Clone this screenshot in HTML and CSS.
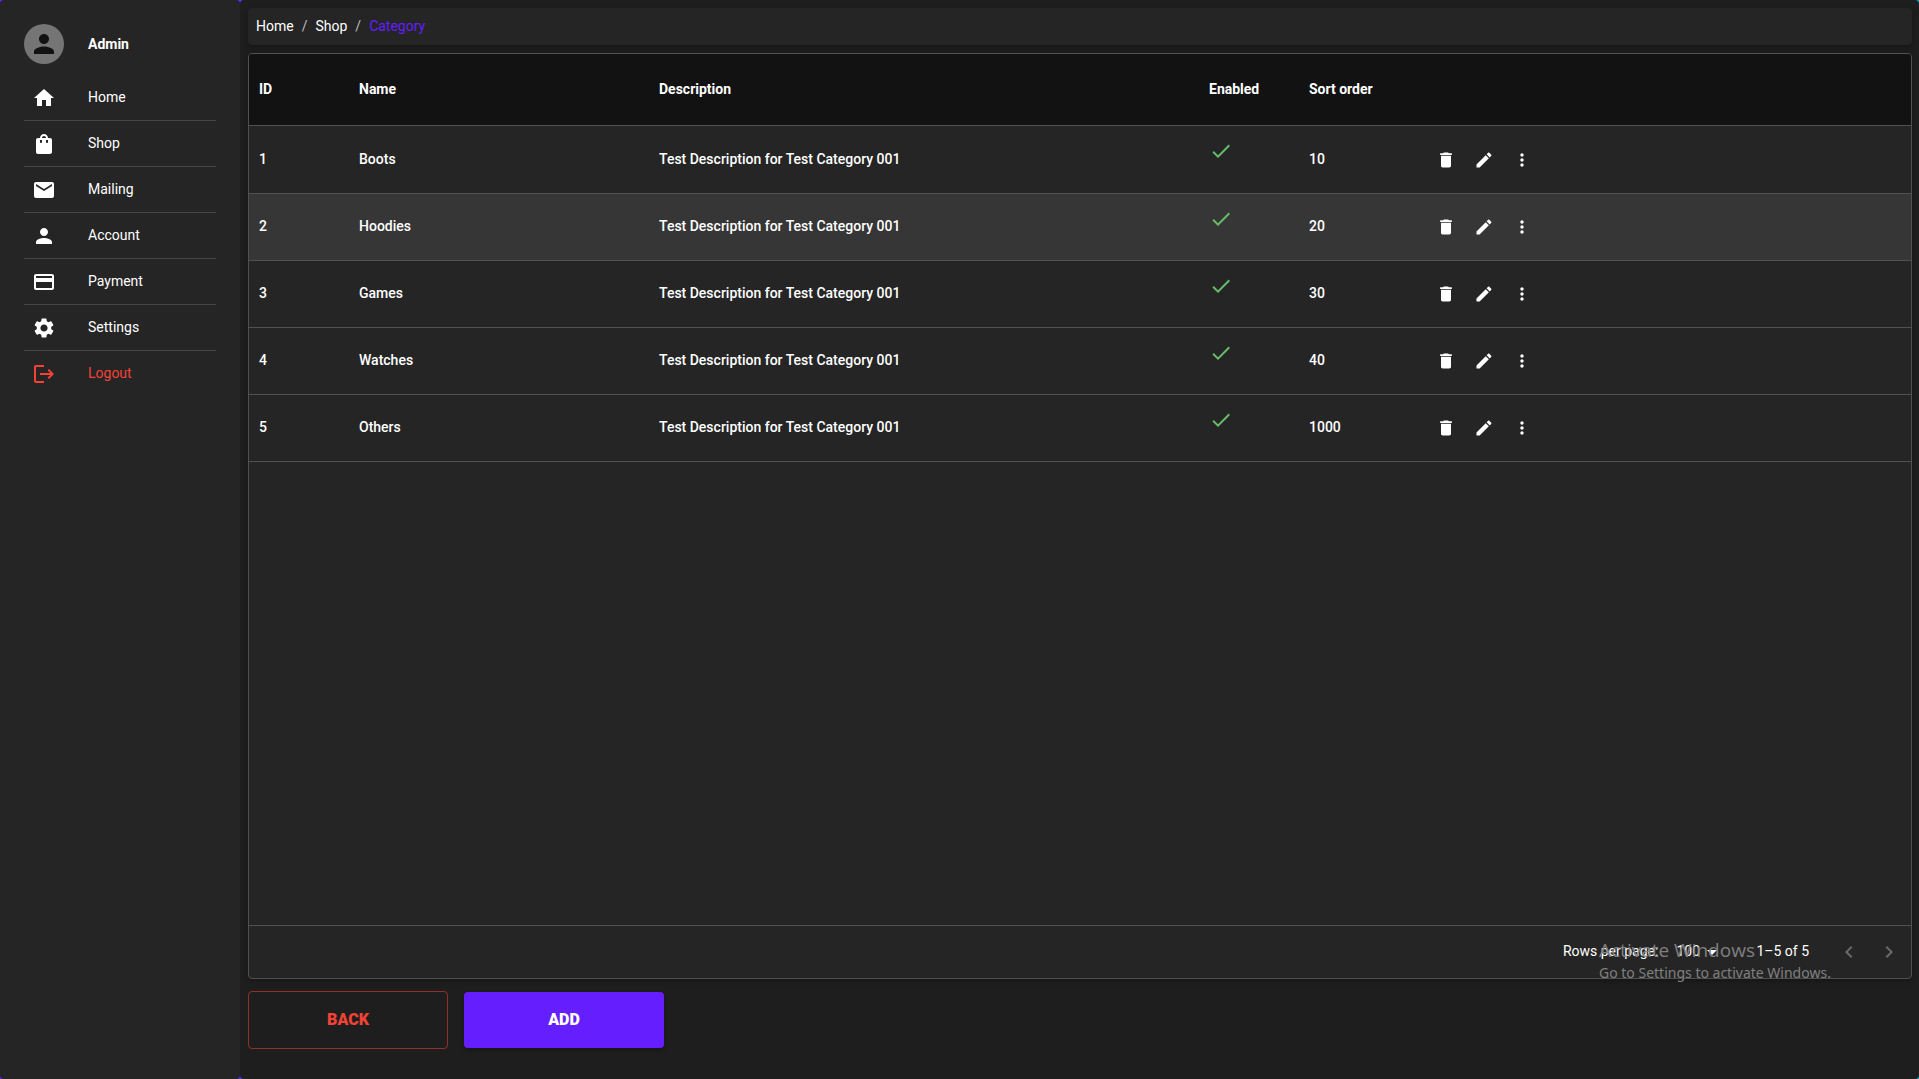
FILE: index.html
```html
<!DOCTYPE html>
<html lang="en">
<head>
<meta charset="utf-8">
<title>Shop categories</title>
<link rel="stylesheet" href="styles.css">
</head>
<body>
<svg class="sprite" aria-hidden="true">
  <symbol id="home" viewBox="0 0 24 24"><path d="M10 20v-6h4v6h5v-8h3L12 3 2 12h3v8z"/></symbol>
  <symbol id="bag" viewBox="0 0 24 24"><path d="M18 6h-2c0-2.21-1.79-4-4-4S8 3.79 8 6H6c-1.1 0-2 .9-2 2v12c0 1.1.9 2 2 2h12c1.1 0 2-.9 2-2V8c0-1.1-.9-2-2-2zm-8 4c0 .55-.45 1-1 1s-1-.45-1-1V8h2v2zm2-6c1.1 0 2 .9 2 2h-4c0-1.1.9-2 2-2zm4 6c0 .55-.45 1-1 1s-1-.45-1-1V8h2v2z"/></symbol>
  <symbol id="mail" viewBox="0 0 24 24"><path d="M20 4H4c-1.1 0-1.99.9-1.99 2L2 18c0 1.1.9 2 2 2h16c1.1 0 2-.9 2-2V6c0-1.1-.9-2-2-2zm0 4l-8 5-8-5V6l8 5 8-5v2z"/></symbol>
  <symbol id="person" viewBox="0 0 24 24"><path d="M12 12c2.21 0 4-1.79 4-4s-1.79-4-4-4-4 1.79-4 4 1.79 4 4 4zm0 2c-2.67 0-8 1.34-8 4v2h16v-2c0-2.66-5.33-4-8-4z"/></symbol>
  <symbol id="card" viewBox="0 0 24 24"><path d="M20 4H4c-1.11 0-1.99.89-1.99 2L2 18c0 1.11.89 2 2 2h16c1.11 0 2-.89 2-2V6c0-1.11-.89-2-2-2zm0 14H4v-6h16v6zm0-10H4V6h16v2z"/></symbol>
  <symbol id="gear" viewBox="0 0 24 24"><path d="M19.14 12.94c.04-.3.06-.61.06-.94 0-.32-.02-.64-.07-.94l2.03-1.58c.18-.14.23-.41.12-.61l-1.92-3.32c-.12-.22-.37-.29-.59-.22l-2.39.96c-.5-.38-1.03-.7-1.62-.94l-.36-2.54c-.04-.24-.24-.41-.48-.41h-3.84c-.24 0-.43.17-.47.41l-.36 2.54c-.59.24-1.13.57-1.62.94l-2.39-.96c-.22-.08-.47 0-.59.22L2.74 8.87c-.12.21-.08.47.12.61l2.03 1.58c-.05.3-.09.63-.09.94s.02.64.07.94l-2.03 1.58c-.18.14-.23.41-.12.61l1.92 3.32c.12.22.37.29.59.22l2.39-.96c.5.38 1.03.7 1.62.94l.36 2.54c.05.24.24.41.48.41h3.84c.24 0 .44-.17.47-.41l.36-2.54c.59-.24 1.13-.56 1.62-.94l2.39.96c.22.08.47 0 .59-.22l1.92-3.32c.12-.22.07-.47-.12-.61l-2.01-1.58zM12 15.6c-1.98 0-3.6-1.62-3.6-3.6s1.62-3.6 3.6-3.6 3.6 1.62 3.6 3.6-1.62 3.6-3.6 3.6z"/></symbol>
  <symbol id="logout" viewBox="0 0 24 24"><path d="M12 5V3H4c-1.1 0-2 .9-2 2v14c0 1.1.9 2 2 2h8v-2H4V5zm5 2-1.4 1.4 2.6 2.6H8v2h10.200l-2.600 2.600L17 17l5-5z"/></symbol>
  <symbol id="check" viewBox="0 0 24 24"><path d="M9 16.170 4.830 12l-1.420 1.410L9 19 21 7l-1.410-1.410z"/></symbol>
  <symbol id="trash" viewBox="0 0 24 24"><path d="M6 19c0 1.100.9 2 2 2h8c1.100 0 2-.9 2-2V7H6v12zM19 4h-3.500l-1-1h-5l-1 1H5v2h14V4z"/></symbol>
  <symbol id="pencil" viewBox="0 0 24 24"><path d="M3 17.250V21h3.750L17.810 9.940l-3.750-3.750L3 17.250zM20.710 7.040c.39-.39.39-1.020 0-1.410l-2.340-2.340c-.39-.39-1.020-.39-1.410 0l-1.830 1.830 3.750 3.750 1.830-1.830z"/></symbol>
  <symbol id="dots" viewBox="0 0 24 24"><path d="M12 8c1.100 0 2-.9 2-2s-.9-2-2-2-2 .9-2 2 .9 2 2 2zm0 2c-1.100 0-2 .9-2 2s.9 2 2 2 2-.9 2-2-.9-2-2-2zm0 6c-1.100 0-2 .9-2 2s.9 2 2 2 2-.9 2-2-.9-2-2-2z"/></symbol>
  <symbol id="left" viewBox="0 0 24 24"><path d="M15.410 7.410 14 6l-6 6 6 6 1.410-1.410L10.830 12z"/></symbol>
  <symbol id="right" viewBox="0 0 24 24"><path d="M8.590 16.590 13.170 12 8.590 7.410 10 6l6 6-6 6z"/></symbol>
  <symbol id="caret" viewBox="0 0 24 24"><path d="m7 10 5 5 5-5z"/></symbol>
</svg>
<div class="app">
  <aside class="sidebar">
    <div class="profile">
      <span class="avatar"><svg class="avatar-icon"><use href="#person"/></svg></span>
      <span>Admin</span>
    </div>
    <nav class="menu">
      <a class="menu-item" href="#"><svg class="icon"><use href="#home"/></svg><span class="menu-label">Home</span></a>
      <a class="menu-item" href="#"><svg class="icon"><use href="#bag"/></svg><span class="menu-label">Shop</span></a>
      <a class="menu-item" href="#"><svg class="icon"><use href="#mail"/></svg><span class="menu-label">Mailing</span></a>
      <a class="menu-item" href="#"><svg class="icon"><use href="#person"/></svg><span class="menu-label">Account</span></a>
      <a class="menu-item" href="#"><svg class="icon"><use href="#card"/></svg><span class="menu-label">Payment</span></a>
      <a class="menu-item" href="#"><svg class="icon"><use href="#gear"/></svg><span class="menu-label">Settings</span></a>
      <a class="menu-item logout" href="#"><svg class="icon"><use href="#logout"/></svg><span class="menu-label">Logout</span></a>
    </nav>
  </aside>
  <main class="content">
    <nav class="breadcrumbs" aria-label="Breadcrumb">
      <a href="#">Home</a><span class="slash">/</span><a href="#">Shop</a><span class="slash">/</span><a class="current" href="#">Category</a>
    </nav>
    <section class="grid">
      <div class="grid-body">
        <table class="categories">
          <colgroup><col class="col-small"><col class="col-name"><col class="col-description"><col class="col-small"><col class="col-sort"><col></colgroup>
          <thead>
            <tr><th>ID</th><th>Name</th><th>Description</th><th>Enabled</th><th>Sort order</th><th></th></tr>
          </thead>
          <tbody>
            <tr><td>1</td><td>Boots</td><td>Test Description for Test Category 001</td><td class="enabled"><svg class="icon"><use href="#check"/></svg></td><td>10</td><td class="tools"><div class="actions"><button aria-label="Delete"><svg class="icon-small"><use href="#trash"/></svg></button><button aria-label="Edit"><svg class="icon-small"><use href="#pencil"/></svg></button><button aria-label="More"><svg class="icon-small"><use href="#dots"/></svg></button></div></td></tr>
            <tr class="hovered"><td>2</td><td>Hoodies</td><td>Test Description for Test Category 001</td><td class="enabled"><svg class="icon"><use href="#check"/></svg></td><td>20</td><td class="tools"><div class="actions"><button aria-label="Delete"><svg class="icon-small"><use href="#trash"/></svg></button><button aria-label="Edit"><svg class="icon-small"><use href="#pencil"/></svg></button><button aria-label="More"><svg class="icon-small"><use href="#dots"/></svg></button></div></td></tr>
            <tr><td>3</td><td>Games</td><td>Test Description for Test Category 001</td><td class="enabled"><svg class="icon"><use href="#check"/></svg></td><td>30</td><td class="tools"><div class="actions"><button aria-label="Delete"><svg class="icon-small"><use href="#trash"/></svg></button><button aria-label="Edit"><svg class="icon-small"><use href="#pencil"/></svg></button><button aria-label="More"><svg class="icon-small"><use href="#dots"/></svg></button></div></td></tr>
            <tr><td>4</td><td>Watches</td><td>Test Description for Test Category 001</td><td class="enabled"><svg class="icon"><use href="#check"/></svg></td><td>40</td><td class="tools"><div class="actions"><button aria-label="Delete"><svg class="icon-small"><use href="#trash"/></svg></button><button aria-label="Edit"><svg class="icon-small"><use href="#pencil"/></svg></button><button aria-label="More"><svg class="icon-small"><use href="#dots"/></svg></button></div></td></tr>
            <tr><td>5</td><td>Others</td><td>Test Description for Test Category 001</td><td class="enabled"><svg class="icon"><use href="#check"/></svg></td><td>1000</td><td class="tools"><div class="actions"><button aria-label="Delete"><svg class="icon-small"><use href="#trash"/></svg></button><button aria-label="Edit"><svg class="icon-small"><use href="#pencil"/></svg></button><button aria-label="More"><svg class="icon-small"><use href="#dots"/></svg></button></div></td></tr>
          </tbody>
        </table>
      </div>
      <footer class="pagination">
        <label for="rows">Rows per page:</label>
        <span class="rows-select">
          <select id="rows"><option>100</option><option>50</option><option>25</option></select>
          <svg class="icon caret"><use href="#caret"/></svg>
        </span>
        <span class="range">1–5 of 5</span>
        <button class="page-button" disabled aria-label="Previous page"><svg class="icon"><use href="#left"/></svg></button>
        <button class="page-button" disabled aria-label="Next page"><svg class="icon"><use href="#right"/></svg></button>
      </footer>
    </section>
    <div class="form-buttons">
      <button class="button button-back">BACK</button>
      <button class="button button-add">ADD</button>
    </div>
  </main>
</div>
<div class="activation">
  <div class="activation-title">Activate Windows</div>
  <div class="activation-text">Go to Settings to activate Windows.</div>
</div>
</body>
</html>
```
FILE: styles.css
```css
* {
  box-sizing: border-box;
}

body {
  margin: 0;
  background: linear-gradient(to right, #651fff, #00b8d4);
  color: #fff;
  font: 400 14px/20px Roboto, sans-serif;
}

a {
  color: inherit;
  text-decoration: none;
}

button,
select {
  font: inherit;
  color: inherit;
  border: 0;
  background: none;
}

svg {
  display: block;
  fill: currentColor;
}

.sprite {
  display: none;
}

.icon {
  width: 24px;
  height: 24px;
}

.icon-small {
  width: 20px;
  height: 20px;
}

.app {
  display: flex;
  min-height: 100vh;
}

.sidebar {
  flex: none;
  width: 240px;
  padding: 24px;
  border-radius: 4px;
  background: #252525;
}

.profile {
  display: flex;
  align-items: center;
  gap: 24px;
  margin-bottom: 11px;
  font-weight: 700;
}

.avatar {
  display: grid;
  place-items: center;
  width: 40px;
  height: 40px;
  border-radius: 50%;
  background: #757575;
  color: #121212;
}

.avatar-icon {
  width: 30px;
  height: 30px;
}

.menu-item {
  display: flex;
  align-items: center;
  gap: 32px;
  height: 46px;
  padding-left: 8px;
  border-bottom: 1px solid #464646;
}

.menu-label {
  padding-bottom: 2px;
}

.menu-item:last-child {
  border-bottom-color: transparent;
}

.logout {
  color: #f44336;
}

.content {
  flex: 1;
  display: flex;
  flex-direction: column;
  gap: 8px;
  min-width: 0;
  padding: 8px 7px 30px 8px;
  border-radius: 4px;
  background: #1e1e1e;
}

.breadcrumbs {
  display: flex;
  align-items: center;
  height: 37px;
  padding: 0 8px 2px;
  border-radius: 4px;
  background: #252525;
  box-shadow: 0 2px 6px rgba(0, 0, 0, 0.3);
}

.slash {
  margin: 0 8px;
  color: #bebebe;
}

.current {
  color: #651fff;
}

.grid {
  flex: 1;
  display: flex;
  flex-direction: column;
  overflow: hidden;
  border: 1px solid #515151;
  border-radius: 4px;
  background: #252525;
  box-shadow: 0 2px 6px rgba(0, 0, 0, 0.3);
}

.grid-body {
  flex: 1;
}

.categories {
  width: 100%;
  table-layout: fixed;
  border-collapse: separate;
  border-spacing: 0;
}

.col-small {
  width: 100px;
}

.col-name {
  width: 300px;
}

.col-description {
  width: 550px;
}

.col-sort {
  width: 118px;
}

.categories th,
.categories td {
  height: 67px;
  padding: 0 10px 2px;
  border-bottom: 1px solid #515151;
  font-weight: 500;
  text-align: left;
}

.categories th {
  height: 72px;
  background: #121212;
  font-weight: 700;
}

.categories tbody tr:first-child td {
  height: 68px;
}

.hovered {
  background: #363636;
}

.categories .enabled {
  padding-top: 13px;
  vertical-align: top;
  color: #66bb6a;
}

.categories .tools {
  padding-bottom: 0;
}

.actions {
  display: flex;
}

.actions button {
  width: 38px;
  padding: 9px;
}

.pagination {
  display: flex;
  align-items: center;
  justify-content: flex-end;
  height: 53px;
  padding-right: 2px;
  border-top: 1px solid #515151;
}

.pagination label,
.range {
  padding-bottom: 2px;
}

.rows-select {
  display: grid;
  align-items: center;
  width: 58px;
  margin: 0 32px 0 8px;
}

.rows-select select,
.caret {
  grid-area: 1 / 1;
}

.rows-select select {
  appearance: none;
  padding: 0 24px 2px 10px;
}

.caret {
  justify-self: end;
  pointer-events: none;
}

.range {
  margin-right: 20px;
}

.page-button {
  width: 40px;
  padding: 8px;
  color: #6a6a6a;
}

.form-buttons {
  display: flex;
  align-items: center;
  gap: 16px;
  padding-top: 4px;
}

.button {
  width: 200px;
  height: 56px;
  border-radius: 4px;
  font-size: 16px;
  font-weight: 900;
}

.button-back {
  height: 58px;
  border: 1px solid #90302a;
  color: #f44336;
}

.button-add {
  background: #651fff;
  box-shadow: 0 2px 4px rgba(0, 0, 0, 0.3);
}

.activation {
  position: absolute;
  right: 84px;
  bottom: 96px;
  width: 236px;
  color: #808080;
  font-family: "Noto Sans", sans-serif;
  white-space: nowrap;
  pointer-events: none;
}

.activation-title {
  font-family: "Open Sans", sans-serif;
  font-size: 19px;
  line-height: 26px;
}
```
